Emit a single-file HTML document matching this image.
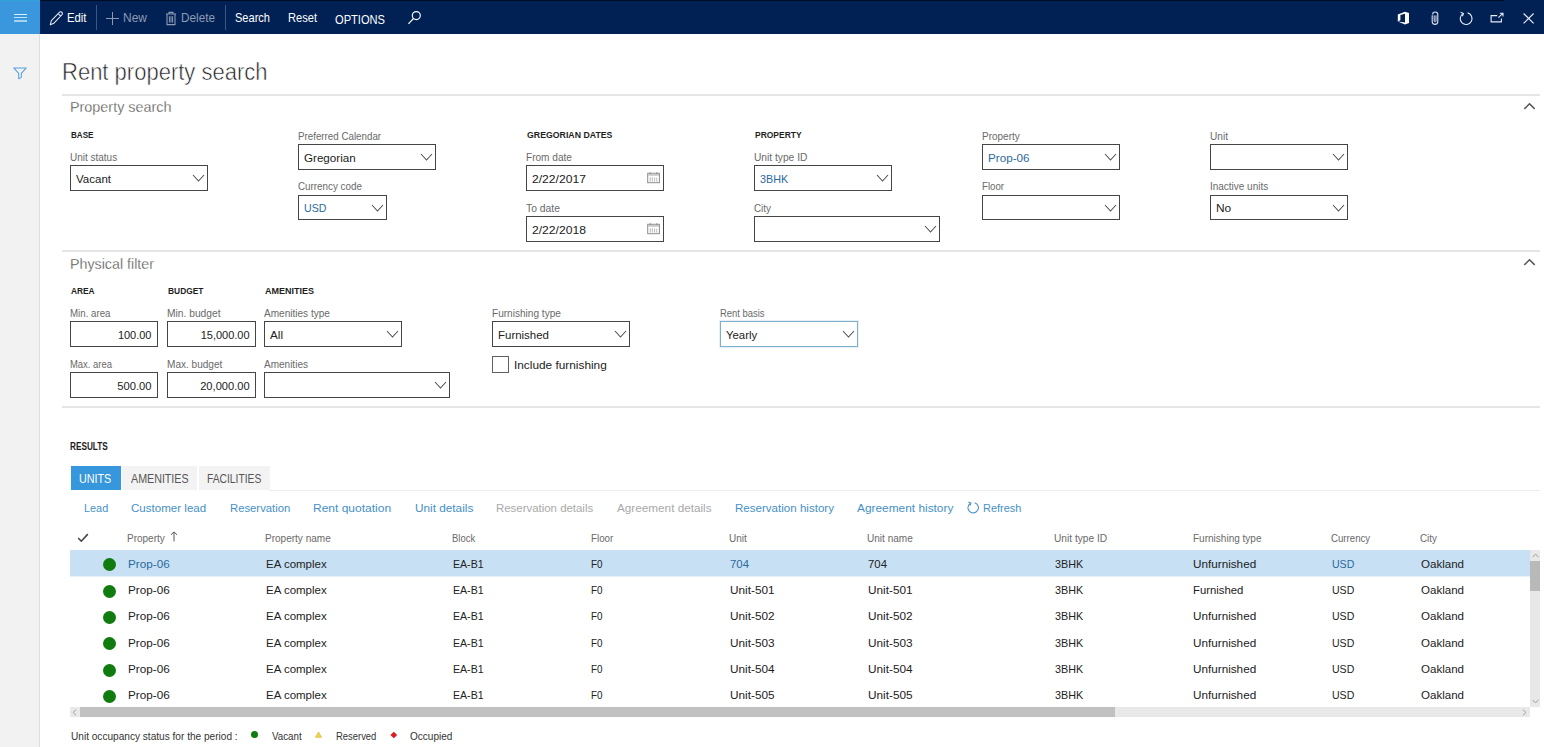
<!DOCTYPE html>
<html><head><meta charset="utf-8"><title>Rent property search</title>
<style>
*{box-sizing:border-box;margin:0;padding:0}
html,body{width:1544px;height:747px;overflow:hidden;background:#fff;font-family:"Liberation Sans",sans-serif;color:#222}
.a{position:absolute;white-space:nowrap;line-height:1}
svg{overflow:visible}
</style></head><body>
<div style="position:absolute;left:0px;top:0px;width:1544px;height:34px;background:#012154;"></div>
<div style="position:absolute;left:40px;top:0px;width:1464px;height:1px;background:#000c24;"></div>
<div style="position:absolute;left:0px;top:0px;width:40px;height:34px;background:#3a96dd;"></div>
<div style="position:absolute;left:0px;top:34px;width:39px;height:713px;background:#f2f2f2;"></div>
<div style="position:absolute;left:39px;top:34px;width:1px;height:713px;background:#dedede;"></div>
<div style="position:absolute;left:0px;top:0px;width:40px;height:1px;background:#30a2d3;"></div>
<div style="position:absolute;left:13.5px;top:14px;width:13.8px;height:1.25px;background:#d2f3ff;"></div>
<div style="position:absolute;left:13.5px;top:17px;width:13.8px;height:1.25px;background:#bfe6f8;"></div>
<div style="position:absolute;left:13.5px;top:20.4px;width:13.8px;height:1.25px;background:#a3d4f2;"></div>
<svg style="position:absolute;left:12px;top:65px" width="16" height="16" viewBox="0 0 16 16"><path d="M1.7 2.9 H14.3 L9.3 8.3 V12.4 L6.7 13.7 V8.3 Z" fill="none" stroke="#559fde" stroke-width="1.05" stroke-linejoin="round"/></svg>
<svg style="position:absolute;left:49.2px;top:10.2px" width="15.1" height="16.2" viewBox="0 0 14 15"><path d="M1.2 13.6 L2.2 9.8 L9.6 2.2 A1.6 1.6 0 0 1 12 4.4 L4.6 12.2 Z M8.6 3.4 L10.8 5.6" fill="none" stroke="#e3eaf6" stroke-width="1" stroke-linejoin="round"/></svg>
<div class="a" style="top:12.1px;font-size:12.8px;color:#fff;left:67.00px;transform-origin:0 0;transform:scaleX(0.8841);">Edit</div>
<div style="position:absolute;left:96px;top:5px;width:1px;height:25px;background:#3f5680;"></div>
<div style="position:absolute;left:106px;top:18px;width:13px;height:1px;background:#8d9ab3;"></div>
<div style="position:absolute;left:112px;top:12px;width:1px;height:13px;background:#8d9ab3;"></div>
<div class="a" style="top:12.1px;font-size:12.8px;color:#8d9ab3;left:123.00px;transform-origin:0 0;transform:scaleX(0.9373);">New</div>
<svg style="position:absolute;left:165px;top:10.8px" width="12" height="15" viewBox="0 0 12 15"><path d="M1 3 H11 M4 3 V1.4 H8 V3 M2 3 V13.6 H10 V3" fill="none" stroke="#8d9ab3" stroke-width="1.1"/><path d="M4.4 5.2 V11.6 M6 5.2 V11.6 M7.6 5.2 V11.6" stroke="#8d9ab3" stroke-width="1"/></svg>
<div class="a" style="top:12.1px;font-size:12.8px;color:#8d9ab3;left:181.00px;transform-origin:0 0;transform:scaleX(0.9190);">Delete</div>
<div style="position:absolute;left:225px;top:5px;width:1px;height:25px;background:#3f5680;"></div>
<div class="a" style="top:12.1px;font-size:12.8px;color:#fff;left:235.00px;transform-origin:0 0;transform:scaleX(0.8630);">Search</div>
<div class="a" style="top:12.1px;font-size:12.8px;color:#fff;left:288.00px;transform-origin:0 0;transform:scaleX(0.8673);">Reset</div>
<div class="a" style="top:14.1px;font-size:12.3px;color:#fff;left:335.00px;transform-origin:0 0;transform:scaleX(0.9032);">OPTIONS</div>
<svg style="position:absolute;left:407.3px;top:10.1px" width="15" height="15" viewBox="0 0 15 15"><circle cx="9.3" cy="5.6" r="4" fill="none" stroke="#fff" stroke-width="1.15"/><path d="M6.5 8.5 L1.4 13.8" stroke="#fff" stroke-width="1.15"/></svg>
<svg style="position:absolute;left:1397px;top:11px" width="13" height="14" viewBox="0 0 13 14"><path d="M0.8 3.6 L8 0.8 L12 2 V12 L8 13.4 L0.8 10.6 L8 11.4 V2.8 L3.4 4 V9.2 L0.8 10.6 Z" fill="#fff"/></svg>
<svg style="position:absolute;left:1430px;top:11px" width="10" height="15" viewBox="0 0 10 15"><path d="M2.2 4.2 V10.6 A2.8 2.8 0 0 0 7.8 10.6 V3.6 A2.6 2.6 0 0 0 2.6 3.6" fill="none" stroke="#d9e1f0" stroke-width="1.1"/><path d="M4.2 4.4 V10.2 A1 1 0 0 0 6 10.2 V4.4" fill="none" stroke="#d9e1f0" stroke-width="1"/></svg>
<svg style="position:absolute;left:1458px;top:11px" width="16" height="15" viewBox="0 0 16 15"><path d="M5 2.6 A5.9 5.9 0 1 0 9.6 1.9" fill="none" stroke="#e6ecf6" stroke-width="1.1"/><path d="M2.6 1.2 L5.4 2.5 L4.4 5.2" fill="none" stroke="#e6ecf6" stroke-width="1.1"/></svg>
<svg style="position:absolute;left:1489px;top:11px" width="16" height="13" viewBox="0 0 16 13"><path d="M8.2 4.6 H2.1 V10.9 H12.4 V7.6" fill="none" stroke="#e6ecf6" stroke-width="1.1"/><path d="M9.4 6.6 L13.8 2.4 M10.8 2.3 H14 V5.4" fill="none" stroke="#e6ecf6" stroke-width="1.05"/></svg>
<svg style="position:absolute;left:1522px;top:12px" width="13" height="13" viewBox="0 0 13 13"><path d="M1.6 1.5 L11.6 11.4 M11.6 1.5 L1.6 11.4" stroke="#e6ecf6" stroke-width="1.15"/></svg>
<div class="a" style="top:61.1px;font-size:23.5px;color:#1e1e1e;left:61.60px;transform-origin:0 0;transform:scaleX(0.9365);-webkit-text-stroke:0.55px #fff;">Rent property search</div>
<div style="position:absolute;left:62px;top:94px;width:1478px;height:2px;background:#e5e5e5;"></div>
<div style="position:absolute;left:62px;top:250px;width:1478px;height:2px;background:#e5e5e5;"></div>
<div style="position:absolute;left:62px;top:406px;width:1478px;height:2px;background:#e5e5e5;"></div>
<div class="a" style="top:100.1px;font-size:14.6px;color:#4a4a4a;left:70.30px;transform-origin:0 0;transform:scaleX(0.9850);-webkit-text-stroke:0.3px #fff;">Property search</div>
<div class="a" style="top:257.1px;font-size:14.6px;color:#4a4a4a;left:70.30px;transform-origin:0 0;transform:scaleX(0.9767);-webkit-text-stroke:0.3px #fff;">Physical filter</div>
<svg style="position:absolute;left:1522.6px;top:102.2px" width="13" height="8" viewBox="0 0 13 8"><path d="M1.3 6.9 L6.5 1.7 L11.7 6.9" fill="none" stroke="#555" stroke-width="1.5"/></svg>
<svg style="position:absolute;left:1522.6px;top:258.2px" width="13" height="8" viewBox="0 0 13 8"><path d="M1.3 6.9 L6.5 1.7 L11.7 6.9" fill="none" stroke="#555" stroke-width="1.5"/></svg>
<div class="a" style="top:130.1px;font-size:9.5px;color:#1e1e1e;left:70.60px;transform-origin:0 0;transform:scaleX(0.8524);font-weight:bold;">BASE</div>
<div class="a" style="top:153.1px;font-size:10.2px;color:#6a6a6a;left:70.40px;transform-origin:0 0;transform:scaleX(0.9796);">Unit status</div>
<div style="position:absolute;left:70px;top:165px;width:138px;height:26px;border:1px solid #454545;background:#fff;"></div>
<div class="a" style="top:173.1px;font-size:11.6px;color:#222;left:76.20px;transform-origin:0 0;transform:scaleX(0.9929);">Vacant</div>
<svg style="position:absolute;left:191.50px;top:174.30px" width="13" height="8" viewBox="-1 -1 13 8"><path d="M0 0 L5.5 6 L11 0" fill="none" stroke="#4c4c4c" stroke-width="1.05"/></svg>
<div class="a" style="top:132.1px;font-size:10.2px;color:#6a6a6a;left:298.40px;transform-origin:0 0;transform:scaleX(0.9592);">Preferred Calendar</div>
<div style="position:absolute;left:298px;top:144px;width:138px;height:26px;border:1px solid #454545;background:#fff;"></div>
<div class="a" style="top:152.1px;font-size:11.6px;color:#222;left:304.20px;transform-origin:0 0;transform:scaleX(1.0024);">Gregorian</div>
<svg style="position:absolute;left:419.50px;top:153.30px" width="13" height="8" viewBox="-1 -1 13 8"><path d="M0 0 L5.5 6 L11 0" fill="none" stroke="#4c4c4c" stroke-width="1.05"/></svg>
<div class="a" style="top:182.1px;font-size:10.2px;color:#6a6a6a;left:298.40px;transform-origin:0 0;transform:scaleX(0.9649);">Currency code</div>
<div style="position:absolute;left:298px;top:195px;width:89px;height:25px;border:1px solid #454545;background:#fff;"></div>
<div class="a" style="top:202.1px;font-size:11.6px;color:#2b6a9c;left:304.20px;transform-origin:0 0;transform:scaleX(0.9146);">USD</div>
<svg style="position:absolute;left:370.50px;top:203.80px" width="13" height="8" viewBox="-1 -1 13 8"><path d="M0 0 L5.5 6 L11 0" fill="none" stroke="#4c4c4c" stroke-width="1.05"/></svg>
<div class="a" style="top:130.1px;font-size:9.5px;color:#1e1e1e;left:526.60px;transform-origin:0 0;transform:scaleX(0.9211);font-weight:bold;">GREGORIAN DATES</div>
<div class="a" style="top:153.1px;font-size:10.2px;color:#6a6a6a;left:526.40px;transform-origin:0 0;transform:scaleX(0.9897);">From date</div>
<div style="position:absolute;left:526px;top:165px;width:138px;height:26px;border:1px solid #454545;background:#fff;"></div>
<div class="a" style="top:173.1px;font-size:11.6px;color:#222;left:531.70px;transform-origin:0 0;transform:scaleX(1.0465);">2/22/2017</div>
<svg style="position:absolute;left:647.4px;top:171.8px" width="13" height="12" viewBox="0 0 13 12"><rect x="0.7" y="1.3" width="11.7" height="9.4" fill="#fff" stroke="#8c8c8c" stroke-width="1"/><rect x="1.2" y="1.8" width="10.7" height="2" fill="#c9c9c9"/><path d="M3.3 0.3 V2 M9.8 0.3 V2" stroke="#8c8c8c" stroke-width="1.1"/><path d="M3.2 5.2 V9.6 M5.3 5.2 V9.6 M7.6 5.6 V9.6 M9.8 5.6 V9.6" stroke="#b0b0b0" stroke-width="0.9"/></svg>
<div class="a" style="top:204.1px;font-size:10.2px;color:#6a6a6a;left:526.40px;transform-origin:0 0;transform:scaleX(1.0163);">To date</div>
<div style="position:absolute;left:526px;top:216px;width:138px;height:26px;border:1px solid #454545;background:#fff;"></div>
<div class="a" style="top:224.1px;font-size:11.6px;color:#222;left:531.70px;transform-origin:0 0;transform:scaleX(1.0465);">2/22/2018</div>
<svg style="position:absolute;left:647.4px;top:222.8px" width="13" height="12" viewBox="0 0 13 12"><rect x="0.7" y="1.3" width="11.7" height="9.4" fill="#fff" stroke="#8c8c8c" stroke-width="1"/><rect x="1.2" y="1.8" width="10.7" height="2" fill="#c9c9c9"/><path d="M3.3 0.3 V2 M9.8 0.3 V2" stroke="#8c8c8c" stroke-width="1.1"/><path d="M3.2 5.2 V9.6 M5.3 5.2 V9.6 M7.6 5.6 V9.6 M9.8 5.6 V9.6" stroke="#b0b0b0" stroke-width="0.9"/></svg>
<div class="a" style="top:130.1px;font-size:9.5px;color:#1e1e1e;left:754.60px;transform-origin:0 0;transform:scaleX(0.8917);font-weight:bold;">PROPERTY</div>
<div class="a" style="top:153.1px;font-size:10.2px;color:#6a6a6a;left:754.40px;transform-origin:0 0;transform:scaleX(1.0022);">Unit type ID</div>
<div style="position:absolute;left:754px;top:165px;width:138px;height:26px;border:1px solid #454545;background:#fff;"></div>
<div class="a" style="top:173.1px;font-size:11.6px;color:#2b6a9c;left:760.20px;transform-origin:0 0;transform:scaleX(0.9306);">3BHK</div>
<svg style="position:absolute;left:875.50px;top:174.30px" width="13" height="8" viewBox="-1 -1 13 8"><path d="M0 0 L5.5 6 L11 0" fill="none" stroke="#4c4c4c" stroke-width="1.05"/></svg>
<div class="a" style="top:204.1px;font-size:10.2px;color:#6a6a6a;left:754.40px;transform-origin:0 0;transform:scaleX(0.9678);">City</div>
<div style="position:absolute;left:754px;top:216px;width:186px;height:26px;border:1px solid #454545;background:#fff;"></div>
<svg style="position:absolute;left:923.50px;top:225.30px" width="13" height="8" viewBox="-1 -1 13 8"><path d="M0 0 L5.5 6 L11 0" fill="none" stroke="#4c4c4c" stroke-width="1.05"/></svg>
<div class="a" style="top:132.1px;font-size:10.2px;color:#6a6a6a;left:982.40px;transform-origin:0 0;transform:scaleX(0.9806);">Property</div>
<div style="position:absolute;left:982px;top:144px;width:138px;height:26px;border:1px solid #454545;background:#fff;"></div>
<div class="a" style="top:152.1px;font-size:11.6px;color:#2b6a9c;left:988.20px;transform-origin:0 0;transform:scaleX(1.0081);">Prop-06</div>
<svg style="position:absolute;left:1103.50px;top:153.30px" width="13" height="8" viewBox="-1 -1 13 8"><path d="M0 0 L5.5 6 L11 0" fill="none" stroke="#4c4c4c" stroke-width="1.05"/></svg>
<div class="a" style="top:182.1px;font-size:10.2px;color:#6a6a6a;left:982.40px;transform-origin:0 0;transform:scaleX(0.9468);">Floor</div>
<div style="position:absolute;left:982px;top:195px;width:138px;height:25px;border:1px solid #454545;background:#fff;"></div>
<svg style="position:absolute;left:1103.50px;top:203.80px" width="13" height="8" viewBox="-1 -1 13 8"><path d="M0 0 L5.5 6 L11 0" fill="none" stroke="#4c4c4c" stroke-width="1.05"/></svg>
<div class="a" style="top:132.1px;font-size:10.2px;color:#6a6a6a;left:1210.40px;transform-origin:0 0;transform:scaleX(0.9924);">Unit</div>
<div style="position:absolute;left:1210px;top:144px;width:138px;height:26px;border:1px solid #454545;background:#fff;"></div>
<svg style="position:absolute;left:1331.50px;top:153.30px" width="13" height="8" viewBox="-1 -1 13 8"><path d="M0 0 L5.5 6 L11 0" fill="none" stroke="#4c4c4c" stroke-width="1.05"/></svg>
<div class="a" style="top:182.1px;font-size:10.2px;color:#6a6a6a;left:1210.40px;transform-origin:0 0;transform:scaleX(0.9777);">Inactive units</div>
<div style="position:absolute;left:1210px;top:195px;width:138px;height:25px;border:1px solid #454545;background:#fff;"></div>
<div class="a" style="top:202.1px;font-size:11.6px;color:#222;left:1216.20px;transform-origin:0 0;transform:scaleX(1.0251);">No</div>
<svg style="position:absolute;left:1331.50px;top:203.80px" width="13" height="8" viewBox="-1 -1 13 8"><path d="M0 0 L5.5 6 L11 0" fill="none" stroke="#4c4c4c" stroke-width="1.05"/></svg>
<div class="a" style="top:286.1px;font-size:9.5px;color:#1e1e1e;left:70.60px;transform-origin:0 0;transform:scaleX(0.8767);font-weight:bold;">AREA</div>
<div class="a" style="top:286.1px;font-size:9.5px;color:#1e1e1e;left:167.60px;transform-origin:0 0;transform:scaleX(0.8850);font-weight:bold;">BUDGET</div>
<div class="a" style="top:286.1px;font-size:9.5px;color:#1e1e1e;left:264.60px;transform-origin:0 0;transform:scaleX(0.9473);font-weight:bold;">AMENITIES</div>
<div class="a" style="top:309.1px;font-size:10.2px;color:#6a6a6a;left:70.40px;transform-origin:0 0;transform:scaleX(0.9526);">Min. area</div>
<div style="position:absolute;left:70px;top:321px;width:88px;height:26px;border:1px solid #454545;background:#fff;"></div>
<div class="a" style="top:329.1px;font-size:11.6px;color:#222;right:1392.20px;transform-origin:100% 0;transform:scaleX(0.9471);">100.00</div>
<div class="a" style="top:360.1px;font-size:10.2px;color:#6a6a6a;left:70.40px;transform-origin:0 0;transform:scaleX(0.9262);">Max. area</div>
<div style="position:absolute;left:70px;top:372px;width:88px;height:26px;border:1px solid #454545;background:#fff;"></div>
<div class="a" style="top:380.1px;font-size:11.6px;color:#222;right:1392.20px;transform-origin:100% 0;transform:scaleX(0.9668);">500.00</div>
<div class="a" style="top:309.1px;font-size:10.2px;color:#6a6a6a;left:167.40px;transform-origin:0 0;transform:scaleX(1.0057);">Min. budget</div>
<div style="position:absolute;left:167px;top:321px;width:89px;height:26px;border:1px solid #454545;background:#fff;"></div>
<div class="a" style="top:329.1px;font-size:11.6px;color:#222;right:1294.20px;transform-origin:100% 0;transform:scaleX(0.9477);">15,000.00</div>
<div class="a" style="top:360.1px;font-size:10.2px;color:#6a6a6a;left:167.40px;transform-origin:0 0;transform:scaleX(0.9870);">Max. budget</div>
<div style="position:absolute;left:167px;top:372px;width:89px;height:26px;border:1px solid #454545;background:#fff;"></div>
<div class="a" style="top:380.1px;font-size:11.6px;color:#222;right:1294.20px;transform-origin:100% 0;transform:scaleX(0.9574);">20,000.00</div>
<div class="a" style="top:309.1px;font-size:10.2px;color:#6a6a6a;left:264.40px;transform-origin:0 0;transform:scaleX(0.9866);">Amenities type</div>
<div style="position:absolute;left:264px;top:321px;width:138px;height:26px;border:1px solid #454545;background:#fff;"></div>
<div class="a" style="top:329.1px;font-size:11.6px;color:#222;left:270.20px;transform-origin:0 0;transform:scaleX(1.0084);">All</div>
<svg style="position:absolute;left:385.50px;top:330.30px" width="13" height="8" viewBox="-1 -1 13 8"><path d="M0 0 L5.5 6 L11 0" fill="none" stroke="#4c4c4c" stroke-width="1.05"/></svg>
<div class="a" style="top:360.1px;font-size:10.2px;color:#6a6a6a;left:264.40px;transform-origin:0 0;transform:scaleX(0.9825);">Amenities</div>
<div style="position:absolute;left:264px;top:372px;width:186px;height:26px;border:1px solid #454545;background:#fff;"></div>
<svg style="position:absolute;left:433.50px;top:381.30px" width="13" height="8" viewBox="-1 -1 13 8"><path d="M0 0 L5.5 6 L11 0" fill="none" stroke="#4c4c4c" stroke-width="1.05"/></svg>
<div class="a" style="top:309.1px;font-size:10.2px;color:#6a6a6a;left:492.40px;transform-origin:0 0;transform:scaleX(0.9895);">Furnishing type</div>
<div style="position:absolute;left:492px;top:321px;width:138px;height:26px;border:1px solid #454545;background:#fff;"></div>
<div class="a" style="top:329.1px;font-size:11.6px;color:#222;left:498.20px;transform-origin:0 0;transform:scaleX(0.9888);">Furnished</div>
<svg style="position:absolute;left:613.50px;top:330.30px" width="13" height="8" viewBox="-1 -1 13 8"><path d="M0 0 L5.5 6 L11 0" fill="none" stroke="#4c4c4c" stroke-width="1.05"/></svg>
<div style="position:absolute;left:492px;top:356px;width:17px;height:17px;border:1px solid #606060;background:#fff;"></div>
<div class="a" style="top:359.1px;font-size:11.6px;color:#222;left:513.50px;transform-origin:0 0;transform:scaleX(1.0207);">Include furnishing</div>
<div class="a" style="top:309.1px;font-size:10.2px;color:#6a6a6a;left:720.40px;transform-origin:0 0;transform:scaleX(0.9255);">Rent basis</div>
<div style="position:absolute;left:720px;top:321px;width:138px;height:26px;border:1px solid #7db0ca;background:#fff;box-shadow:0 0 0 1px #e6f0f5;"></div>
<div class="a" style="top:329.1px;font-size:11.6px;color:#222;left:726.20px;transform-origin:0 0;transform:scaleX(0.9807);">Yearly</div>
<svg style="position:absolute;left:841.50px;top:330.30px" width="13" height="8" viewBox="-1 -1 13 8"><path d="M0 0 L5.5 6 L11 0" fill="none" stroke="#4c4c4c" stroke-width="1.05"/></svg>
<div class="a" style="top:442.1px;font-size:10px;color:#1e1e1e;left:70.30px;transform-origin:0 0;transform:scaleX(0.8230);font-weight:bold;">RESULTS</div>
<div style="position:absolute;left:71px;top:466px;width:50px;height:24px;background:#3797dc;"></div>
<div class="a" style="top:473.1px;font-size:12px;color:#fff;left:79.40px;transform-origin:0 0;transform:scaleX(0.8972);">UNITS</div>
<div style="position:absolute;left:122px;top:466px;width:75px;height:24px;background:#f3f3f3;"></div>
<div class="a" style="top:473.1px;font-size:12px;color:#555;left:130.60px;transform-origin:0 0;transform:scaleX(0.8906);">AMENITIES</div>
<div style="position:absolute;left:199px;top:466px;width:71px;height:24px;background:#f3f3f3;"></div>
<div class="a" style="top:473.1px;font-size:12px;color:#555;left:207.00px;transform-origin:0 0;transform:scaleX(0.8571);">FACILITIES</div>
<div style="position:absolute;left:270px;top:490px;width:1270px;height:1px;background:#ececec;"></div>
<div class="a" style="top:502.1px;font-size:11.6px;color:#4590c8;left:83.80px;transform-origin:0 0;transform:scaleX(0.9379);">Lead</div>
<div class="a" style="top:502.1px;font-size:11.6px;color:#4590c8;left:131.30px;transform-origin:0 0;transform:scaleX(0.9970);">Customer lead</div>
<div class="a" style="top:502.1px;font-size:11.6px;color:#4590c8;left:230.00px;transform-origin:0 0;transform:scaleX(0.9743);">Reservation</div>
<div class="a" style="top:502.1px;font-size:11.6px;color:#4590c8;left:313.20px;transform-origin:0 0;transform:scaleX(1.0351);">Rent quotation</div>
<div class="a" style="top:502.1px;font-size:11.6px;color:#4590c8;left:414.50px;transform-origin:0 0;transform:scaleX(1.0160);">Unit details</div>
<div class="a" style="top:502.1px;font-size:11.6px;color:#a9a9a9;left:496.00px;transform-origin:0 0;transform:scaleX(0.9853);">Reservation details</div>
<div class="a" style="top:502.1px;font-size:11.6px;color:#a9a9a9;left:616.80px;transform-origin:0 0;transform:scaleX(1.0119);">Agreement details</div>
<div class="a" style="top:502.1px;font-size:11.6px;color:#4590c8;left:734.70px;transform-origin:0 0;transform:scaleX(0.9972);">Reservation history</div>
<div class="a" style="top:502.1px;font-size:11.6px;color:#4590c8;left:856.60px;transform-origin:0 0;transform:scaleX(1.0242);">Agreement history</div>
<svg style="position:absolute;left:966px;top:501px" width="14" height="14" viewBox="0 0 14 14"><path d="M4.6 2.2 A5.2 5.2 0 1 0 8.6 1.7" fill="none" stroke="#4590c8" stroke-width="1.05"/><path d="M2.4 1 L4.9 2.1 L4 4.6" fill="none" stroke="#4590c8" stroke-width="1.05"/></svg>
<div class="a" style="top:502.1px;font-size:11.6px;color:#4590c8;left:982.90px;transform-origin:0 0;transform:scaleX(0.9455);">Refresh</div>
<svg style="position:absolute;left:77px;top:533px" width="12" height="10" viewBox="0 0 12 10"><path d="M1.2 5 L4.3 8.2 L10.8 1.1" fill="none" stroke="#444" stroke-width="1.6"/></svg>
<div class="a" style="top:534.1px;font-size:10.2px;color:#6a6a6a;left:127.00px;transform-origin:0 0;transform:scaleX(0.9806);">Property</div>
<div class="a" style="top:534.1px;font-size:10.2px;color:#6a6a6a;left:265.30px;transform-origin:0 0;transform:scaleX(0.9837);">Property name</div>
<div class="a" style="top:534.1px;font-size:10.2px;color:#6a6a6a;left:452.30px;transform-origin:0 0;transform:scaleX(0.9302);">Block</div>
<div class="a" style="top:534.1px;font-size:10.2px;color:#6a6a6a;left:590.50px;transform-origin:0 0;transform:scaleX(0.9597);">Floor</div>
<div class="a" style="top:534.1px;font-size:10.2px;color:#6a6a6a;left:729.00px;transform-origin:0 0;transform:scaleX(0.9813);">Unit</div>
<div class="a" style="top:534.1px;font-size:10.2px;color:#6a6a6a;left:867.40px;transform-origin:0 0;transform:scaleX(0.9853);">Unit name</div>
<div class="a" style="top:534.1px;font-size:10.2px;color:#6a6a6a;left:1054.00px;transform-origin:0 0;transform:scaleX(0.9984);">Unit type ID</div>
<div class="a" style="top:534.1px;font-size:10.2px;color:#6a6a6a;left:1192.50px;transform-origin:0 0;transform:scaleX(0.9838);">Furnishing type</div>
<div class="a" style="top:534.1px;font-size:10.2px;color:#6a6a6a;left:1331.00px;transform-origin:0 0;transform:scaleX(0.9474);">Currency</div>
<div class="a" style="top:534.1px;font-size:10.2px;color:#6a6a6a;left:1420.10px;transform-origin:0 0;transform:scaleX(0.9678);">City</div>
<svg style="position:absolute;left:170px;top:531px" width="8" height="11" viewBox="0 0 8 11"><path d="M4 10.4 V1 M1 3.8 L4 0.9 L7 3.8" fill="none" stroke="#555" stroke-width="1"/></svg>
<div style="position:absolute;left:70px;top:550px;width:1460px;height:26px;background:#c7e0f4;"></div>
<div style="position:absolute;left:70px;top:576px;width:1460px;height:1px;background:#e6f1fa;"></div>
<div style="position:absolute;left:102.5px;top:558.4px;width:13px;height:13px;border-radius:50%;background:#107c10"></div>
<div class="a" style="top:558.1px;font-size:11.6px;color:#2b6a9c;left:127.60px;transform-origin:0 0;transform:scaleX(1.0105);">Prop-06</div>
<div class="a" style="top:558.1px;font-size:11.6px;color:#222;left:266.30px;transform-origin:0 0;transform:scaleX(0.9910);">EA complex</div>
<div class="a" style="top:558.1px;font-size:11.6px;color:#222;left:452.60px;transform-origin:0 0;transform:scaleX(0.9127);">EA-B1</div>
<div class="a" style="top:558.1px;font-size:11.6px;color:#222;left:591.20px;transform-origin:0 0;transform:scaleX(0.8496);">F0</div>
<div class="a" style="top:558.1px;font-size:11.6px;color:#2b6a9c;left:729.60px;transform-origin:0 0;transform:scaleX(0.9818);">704</div>
<div class="a" style="top:558.1px;font-size:11.6px;color:#222;left:867.90px;transform-origin:0 0;transform:scaleX(0.9818);">704</div>
<div class="a" style="top:558.1px;font-size:11.6px;color:#222;left:1054.60px;transform-origin:0 0;transform:scaleX(0.9306);">3BHK</div>
<div class="a" style="top:558.1px;font-size:11.6px;color:#222;left:1193.10px;transform-origin:0 0;transform:scaleX(1.0105);">Unfurnished</div>
<div class="a" style="top:558.1px;font-size:11.6px;color:#2b6a9c;left:1331.60px;transform-origin:0 0;transform:scaleX(0.9105);">USD</div>
<div class="a" style="top:558.1px;font-size:11.6px;color:#222;left:1421.10px;transform-origin:0 0;transform:scaleX(0.9953);">Oakland</div>
<div style="position:absolute;left:102.5px;top:584.7px;width:13px;height:13px;border-radius:50%;background:#107c10"></div>
<div class="a" style="top:584.1px;font-size:11.6px;color:#222;left:127.60px;transform-origin:0 0;transform:scaleX(1.0105);">Prop-06</div>
<div class="a" style="top:584.1px;font-size:11.6px;color:#222;left:266.30px;transform-origin:0 0;transform:scaleX(0.9910);">EA complex</div>
<div class="a" style="top:584.1px;font-size:11.6px;color:#222;left:452.60px;transform-origin:0 0;transform:scaleX(0.9127);">EA-B1</div>
<div class="a" style="top:584.1px;font-size:11.6px;color:#222;left:591.20px;transform-origin:0 0;transform:scaleX(0.8496);">F0</div>
<div class="a" style="top:584.1px;font-size:11.6px;color:#222;left:729.60px;transform-origin:0 0;transform:scaleX(1.0173);">Unit-501</div>
<div class="a" style="top:584.1px;font-size:11.6px;color:#222;left:867.90px;transform-origin:0 0;transform:scaleX(1.0173);">Unit-501</div>
<div class="a" style="top:584.1px;font-size:11.6px;color:#222;left:1054.60px;transform-origin:0 0;transform:scaleX(0.9306);">3BHK</div>
<div class="a" style="top:584.1px;font-size:11.6px;color:#222;left:1193.10px;transform-origin:0 0;transform:scaleX(0.9752);">Furnished</div>
<div class="a" style="top:584.1px;font-size:11.6px;color:#222;left:1331.60px;transform-origin:0 0;transform:scaleX(0.9105);">USD</div>
<div class="a" style="top:584.1px;font-size:11.6px;color:#222;left:1421.10px;transform-origin:0 0;transform:scaleX(0.9953);">Oakland</div>
<div style="position:absolute;left:102.5px;top:611.0px;width:13px;height:13px;border-radius:50%;background:#107c10"></div>
<div class="a" style="top:610.1px;font-size:11.6px;color:#222;left:127.60px;transform-origin:0 0;transform:scaleX(1.0105);">Prop-06</div>
<div class="a" style="top:610.1px;font-size:11.6px;color:#222;left:266.30px;transform-origin:0 0;transform:scaleX(0.9910);">EA complex</div>
<div class="a" style="top:610.1px;font-size:11.6px;color:#222;left:452.60px;transform-origin:0 0;transform:scaleX(0.9127);">EA-B1</div>
<div class="a" style="top:610.1px;font-size:11.6px;color:#222;left:591.20px;transform-origin:0 0;transform:scaleX(0.8496);">F0</div>
<div class="a" style="top:610.1px;font-size:11.6px;color:#222;left:729.60px;transform-origin:0 0;transform:scaleX(1.0173);">Unit-502</div>
<div class="a" style="top:610.1px;font-size:11.6px;color:#222;left:867.90px;transform-origin:0 0;transform:scaleX(1.0173);">Unit-502</div>
<div class="a" style="top:610.1px;font-size:11.6px;color:#222;left:1054.60px;transform-origin:0 0;transform:scaleX(0.9306);">3BHK</div>
<div class="a" style="top:610.1px;font-size:11.6px;color:#222;left:1193.10px;transform-origin:0 0;transform:scaleX(1.0105);">Unfurnished</div>
<div class="a" style="top:610.1px;font-size:11.6px;color:#222;left:1331.60px;transform-origin:0 0;transform:scaleX(0.9105);">USD</div>
<div class="a" style="top:610.1px;font-size:11.6px;color:#222;left:1421.10px;transform-origin:0 0;transform:scaleX(0.9953);">Oakland</div>
<div style="position:absolute;left:102.5px;top:637.3px;width:13px;height:13px;border-radius:50%;background:#107c10"></div>
<div class="a" style="top:637.1px;font-size:11.6px;color:#222;left:127.60px;transform-origin:0 0;transform:scaleX(1.0105);">Prop-06</div>
<div class="a" style="top:637.1px;font-size:11.6px;color:#222;left:266.30px;transform-origin:0 0;transform:scaleX(0.9910);">EA complex</div>
<div class="a" style="top:637.1px;font-size:11.6px;color:#222;left:452.60px;transform-origin:0 0;transform:scaleX(0.9127);">EA-B1</div>
<div class="a" style="top:637.1px;font-size:11.6px;color:#222;left:591.20px;transform-origin:0 0;transform:scaleX(0.8496);">F0</div>
<div class="a" style="top:637.1px;font-size:11.6px;color:#222;left:729.60px;transform-origin:0 0;transform:scaleX(1.0173);">Unit-503</div>
<div class="a" style="top:637.1px;font-size:11.6px;color:#222;left:867.90px;transform-origin:0 0;transform:scaleX(1.0173);">Unit-503</div>
<div class="a" style="top:637.1px;font-size:11.6px;color:#222;left:1054.60px;transform-origin:0 0;transform:scaleX(0.9306);">3BHK</div>
<div class="a" style="top:637.1px;font-size:11.6px;color:#222;left:1193.10px;transform-origin:0 0;transform:scaleX(1.0105);">Unfurnished</div>
<div class="a" style="top:637.1px;font-size:11.6px;color:#222;left:1331.60px;transform-origin:0 0;transform:scaleX(0.9105);">USD</div>
<div class="a" style="top:637.1px;font-size:11.6px;color:#222;left:1421.10px;transform-origin:0 0;transform:scaleX(0.9953);">Oakland</div>
<div style="position:absolute;left:102.5px;top:663.6px;width:13px;height:13px;border-radius:50%;background:#107c10"></div>
<div class="a" style="top:663.1px;font-size:11.6px;color:#222;left:127.60px;transform-origin:0 0;transform:scaleX(1.0105);">Prop-06</div>
<div class="a" style="top:663.1px;font-size:11.6px;color:#222;left:266.30px;transform-origin:0 0;transform:scaleX(0.9910);">EA complex</div>
<div class="a" style="top:663.1px;font-size:11.6px;color:#222;left:452.60px;transform-origin:0 0;transform:scaleX(0.9127);">EA-B1</div>
<div class="a" style="top:663.1px;font-size:11.6px;color:#222;left:591.20px;transform-origin:0 0;transform:scaleX(0.8496);">F0</div>
<div class="a" style="top:663.1px;font-size:11.6px;color:#222;left:729.60px;transform-origin:0 0;transform:scaleX(1.0173);">Unit-504</div>
<div class="a" style="top:663.1px;font-size:11.6px;color:#222;left:867.90px;transform-origin:0 0;transform:scaleX(1.0173);">Unit-504</div>
<div class="a" style="top:663.1px;font-size:11.6px;color:#222;left:1054.60px;transform-origin:0 0;transform:scaleX(0.9306);">3BHK</div>
<div class="a" style="top:663.1px;font-size:11.6px;color:#222;left:1193.10px;transform-origin:0 0;transform:scaleX(1.0105);">Unfurnished</div>
<div class="a" style="top:663.1px;font-size:11.6px;color:#222;left:1331.60px;transform-origin:0 0;transform:scaleX(0.9105);">USD</div>
<div class="a" style="top:663.1px;font-size:11.6px;color:#222;left:1421.10px;transform-origin:0 0;transform:scaleX(0.9953);">Oakland</div>
<div style="position:absolute;left:102.5px;top:689.9px;width:13px;height:13px;border-radius:50%;background:#107c10"></div>
<div class="a" style="top:689.1px;font-size:11.6px;color:#222;left:127.60px;transform-origin:0 0;transform:scaleX(1.0105);">Prop-06</div>
<div class="a" style="top:689.1px;font-size:11.6px;color:#222;left:266.30px;transform-origin:0 0;transform:scaleX(0.9910);">EA complex</div>
<div class="a" style="top:689.1px;font-size:11.6px;color:#222;left:452.60px;transform-origin:0 0;transform:scaleX(0.9127);">EA-B1</div>
<div class="a" style="top:689.1px;font-size:11.6px;color:#222;left:591.20px;transform-origin:0 0;transform:scaleX(0.8496);">F0</div>
<div class="a" style="top:689.1px;font-size:11.6px;color:#222;left:729.60px;transform-origin:0 0;transform:scaleX(1.0173);">Unit-505</div>
<div class="a" style="top:689.1px;font-size:11.6px;color:#222;left:867.90px;transform-origin:0 0;transform:scaleX(1.0173);">Unit-505</div>
<div class="a" style="top:689.1px;font-size:11.6px;color:#222;left:1054.60px;transform-origin:0 0;transform:scaleX(0.9306);">3BHK</div>
<div class="a" style="top:689.1px;font-size:11.6px;color:#222;left:1193.10px;transform-origin:0 0;transform:scaleX(1.0105);">Unfurnished</div>
<div class="a" style="top:689.1px;font-size:11.6px;color:#222;left:1331.60px;transform-origin:0 0;transform:scaleX(0.9105);">USD</div>
<div class="a" style="top:689.1px;font-size:11.6px;color:#222;left:1421.10px;transform-origin:0 0;transform:scaleX(0.9953);">Oakland</div>
<div style="position:absolute;left:1530px;top:550px;width:10px;height:157px;background:#e8e8e8;"></div>
<div style="position:absolute;left:1530px;top:561px;width:10px;height:30px;background:#b9b9b9;"></div>
<svg style="position:absolute;left:1531.5px;top:553px" width="7" height="5" viewBox="0 0 7 5"><path d="M0.6 4.2 L3.5 1 L6.4 4.2" fill="none" stroke="#9a9a9a" stroke-width="0.9"/></svg>
<svg style="position:absolute;left:1531.5px;top:699px" width="7" height="5" viewBox="0 0 7 5"><path d="M0.6 0.8 L3.5 4 L6.4 0.8" fill="none" stroke="#9a9a9a" stroke-width="0.9"/></svg>
<div style="position:absolute;left:70px;top:707px;width:1460px;height:10px;background:#e9e9e9;"></div>
<div style="position:absolute;left:80px;top:707px;width:1035px;height:10px;background:#c1c1c1;"></div>
<svg style="position:absolute;left:72px;top:709px" width="5" height="7" viewBox="0 0 5 7"><path d="M4.2 0.6 L1 3.5 L4.2 6.4" fill="none" stroke="#9a9a9a" stroke-width="0.9"/></svg>
<svg style="position:absolute;left:1522px;top:709px" width="5" height="7" viewBox="0 0 5 7"><path d="M0.8 0.6 L4 3.5 L0.8 6.4" fill="none" stroke="#9a9a9a" stroke-width="0.9"/></svg>
<div class="a" style="top:732.1px;font-size:10.4px;color:#333;left:70.60px;transform-origin:0 0;transform:scaleX(0.9716);">Unit occupancy status for the period :</div>
<div style="position:absolute;left:250.5px;top:730.6px;width:7.4px;height:7.4px;border-radius:50%;background:#107c10"></div>
<div class="a" style="top:732.1px;font-size:10.4px;color:#333;left:271.70px;transform-origin:0 0;transform:scaleX(0.9397);">Vacant</div>
<svg style="position:absolute;left:314px;top:730.4px" width="9" height="8" viewBox="0 0 9 8"><path d="M4.5 1.9 L7.5 7.3 H1.5 Z" fill="#f0d548" stroke="#d8bb35" stroke-width="0.7" stroke-linejoin="round"/></svg>
<div class="a" style="top:732.1px;font-size:10.4px;color:#333;left:335.70px;transform-origin:0 0;transform:scaleX(0.9077);">Reserved</div>
<svg style="position:absolute;left:388.5px;top:729.7px" width="9" height="9" viewBox="0 0 9 9"><path d="M4.8 1.7 L8.2 5 L4.8 8.3 L1.4 5 Z" fill="#dc1c22"/></svg>
<div class="a" style="top:732.1px;font-size:10.4px;color:#333;left:409.80px;transform-origin:0 0;transform:scaleX(0.9674);">Occupied</div>
</body></html>
